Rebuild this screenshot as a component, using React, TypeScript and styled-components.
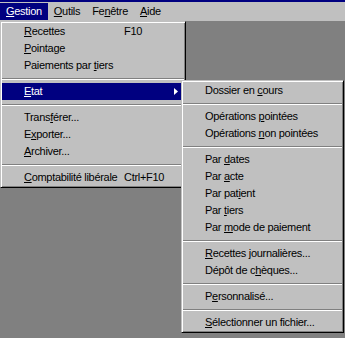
import React from "react";
import styled, { createGlobalStyle } from "styled-components";

const GlobalStyle = createGlobalStyle`
  html, body {
    margin: 0;
    padding: 0;
    background: #808080;
  }
  body {
    font-family: "Liberation Sans", Arial, sans-serif;
    font-size: 11px;
    letter-spacing: -0.3px;
    color: #000;
  }
`;

const Screen = styled.div`
  width: 345px;
  height: 338px;
  display: flex;
  flex-direction: column;
  overflow: hidden;
  background: #808080;
`;

const TitleStrip = styled.div`
  height: 2px;
  background: #000080;
`;

const MenuBar = styled.div`
  height: 17px;
  padding: 1px 0;
  display: flex;
  background: #c0c0c0;
`;

const BarItem = styled.div<{ $active?: boolean }>`
  height: 17px;
  line-height: 17px;
  padding: 0 6px;
  background: ${(p) => (p.$active ? "#000080" : "transparent")};
  color: ${(p) => (p.$active ? "#fff" : "#000")};
`;

const Desktop = styled.div`
  position: relative;
  flex: 1;
`;

const Menu = styled.div<{ $width: number }>`
  position: absolute;
  width: ${(p) => p.$width}px;
  box-sizing: border-box;
  padding: 1px;
  background: #c0c0c0;
  border: 1px solid;
  border-color: #c0c0c0 #000 #000 #c0c0c0;
  box-shadow: inset 1px 1px #fff, inset -1px -1px #808080;
  z-index: 1;
`;

const DropDown = styled(Menu)`
  left: 0;
  top: 0;
`;

const SubMenu = styled(Menu)`
  left: calc(100% - 3px);
  top: -3px;
  z-index: 2;
`;

const Row = styled.div<{ $labelWidth: number; $active?: boolean }>`
  position: relative;
  height: 17px;
  line-height: 17px;
  display: grid;
  grid-template-columns: ${(p) => p.$labelWidth}px 1fr auto;
  align-items: center;
  padding: 0 6px 0 22px;
  white-space: nowrap;
  background: ${(p) => (p.$active ? "#000080" : "transparent")};
  color: ${(p) => (p.$active ? "#fff" : "#000")};
`;

const Key = styled.span`
  text-decoration: underline;
  text-underline-offset: 1px;
`;

const Separator = styled.div`
  margin: 4px 0 3px;
  border-top: 1px solid #808080;
  border-bottom: 1px solid #fff;
`;

const Arrow = () => (
  <svg width="4" height="7" viewBox="0 0 4 7" style={{ display: "block" }}>
    <polygon points="0,0 4,3.5 0,7" fill="currentColor" />
  </svg>
);

// label with one underlined access key at index k
const L = ({ t, k }: { t: string; k: number }) => (
  <span>
    {t.slice(0, k)}
    <Key>{t[k]}</Key>
    {t.slice(k + 1)}
  </span>
);

const subItems: (null | [string, number])[] = [
  ["Dossier en cours", 11],
  null,
  ["Opérations pointées", 11],
  ["Opérations non pointées", 11],
  null,
  ["Par dates", 4],
  ["Par acte", 4],
  ["Par patient", 7],
  ["Par tiers", 4],
  ["Par mode de paiement", 4],
  null,
  ["Recettes journalières...", 0],
  ["Dépôt de chèques...", 10],
  null,
  ["Personnalisé...", 1],
  null,
  ["Sélectionner un fichier...", 0],
];

export default function App() {
  return (
    <Screen>
      <GlobalStyle />
      <TitleStrip />
      <MenuBar>
        <BarItem $active>
          <L t="Gestion" k={0} />
        </BarItem>
        <BarItem>
          <L t="Outils" k={0} />
        </BarItem>
        <BarItem>
          <L t="Fenêtre" k={2} />
        </BarItem>
        <BarItem>
          <L t="Aide" k={0} />
        </BarItem>
      </MenuBar>
      <Desktop>
        <DropDown $width={186}>
          <Row $labelWidth={100}>
            <L t="Recettes" k={0} />
            <span>F10</span>
          </Row>
          <Row $labelWidth={100}>
            <L t="Pointage" k={0} />
          </Row>
          <Row $labelWidth={100}>
            <L t="Paiements par tiers" k={14} />
          </Row>
          <Separator />
          <Row $labelWidth={100} $active>
            <L t="Etat" k={0} />
            <span />
            <Arrow />
            <SubMenu $width={163}>
              {subItems.map((it, i) =>
                it ? (
                  <Row key={i} $labelWidth={120}>
                    <L t={it[0]} k={it[1]} />
                  </Row>
                ) : (
                  <Separator key={i} />
                )
              )}
            </SubMenu>
          </Row>
          <Separator />
          <Row $labelWidth={100}>
            <L t="Transférer..." k={5} />
          </Row>
          <Row $labelWidth={100}>
            <L t="Exporter..." k={1} />
          </Row>
          <Row $labelWidth={100}>
            <L t="Archiver..." k={0} />
          </Row>
          <Separator />
          <Row $labelWidth={100}>
            <L t="Comptabilité libérale" k={0} />
            <span>Ctrl+F10</span>
          </Row>
        </DropDown>
      </Desktop>
    </Screen>
  );
}
